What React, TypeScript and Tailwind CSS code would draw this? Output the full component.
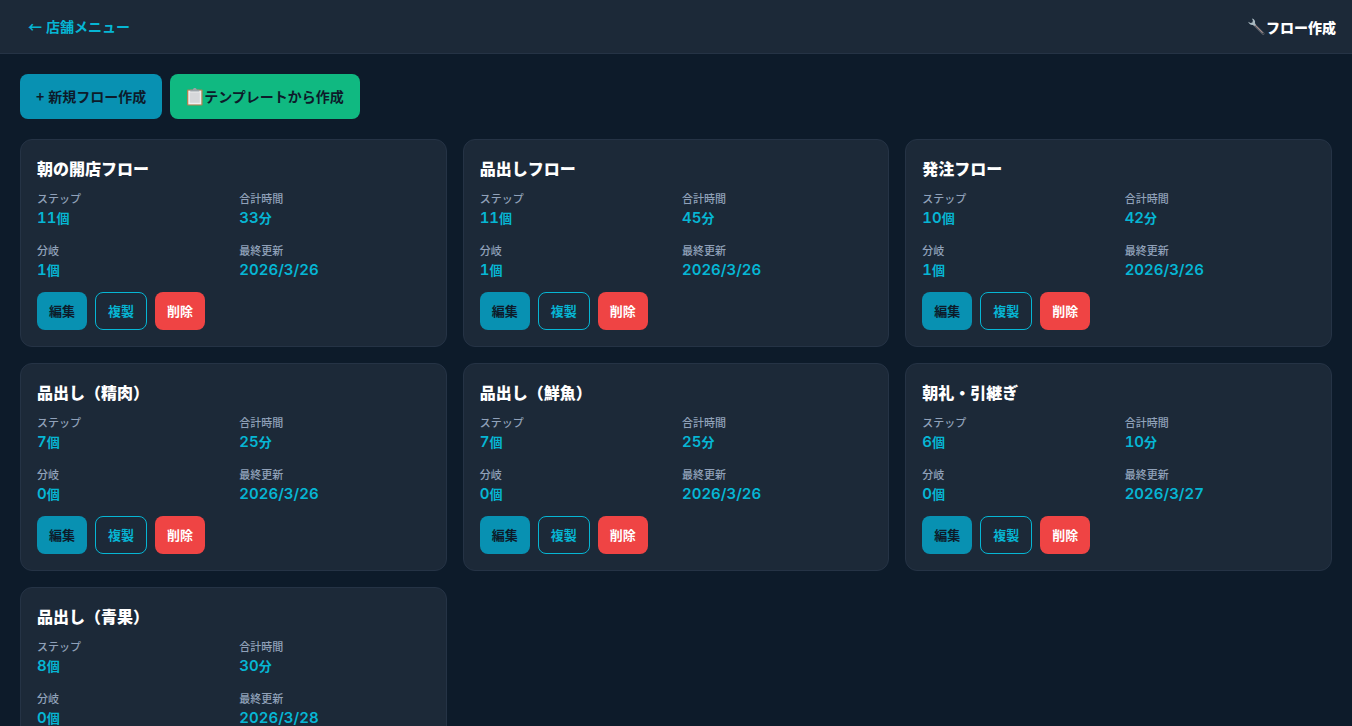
import React from 'react';

interface Flow {
  id: number;
  name: string;
  steps: number;
  minutes: number;
  branches: number;
  updatedAt: string;
}

const flows: Flow[] = [
  { id: 1, name: '朝の開店フロー', steps: 11, minutes: 33, branches: 1, updatedAt: '2026/3/26' },
  { id: 2, name: '品出しフロー', steps: 11, minutes: 45, branches: 1, updatedAt: '2026/3/26' },
  { id: 3, name: '発注フロー', steps: 10, minutes: 42, branches: 1, updatedAt: '2026/3/26' },
  { id: 4, name: '品出し（精肉）', steps: 7, minutes: 25, branches: 0, updatedAt: '2026/3/26' },
  { id: 5, name: '品出し（鮮魚）', steps: 7, minutes: 25, branches: 0, updatedAt: '2026/3/26' },
  { id: 6, name: '朝礼・引継ぎ', steps: 6, minutes: 10, branches: 0, updatedAt: '2026/3/27' },
  { id: 7, name: '品出し（青果）', steps: 8, minutes: 30, branches: 0, updatedAt: '2026/3/28' }
];

const WrenchIcon: React.FC = () => (
  <svg viewBox="0 0 18 18" className="h-[18px] w-[18px] shrink-0" aria-hidden="true">
    <path d="M6 6.4 L15.2 15.6" stroke="#5d646d" strokeWidth="2.6" strokeLinecap="round" />
    <path d="M7.2 7.2 L14.4 14.4" stroke="#a88a88" strokeWidth="1" strokeLinecap="round" />
    <path
      d="M3.9 .5 C6.4 .9 7.6 3 7 5.2 L7.8 6.4 L6.3 8 L5.1 6.9 C2.8 7.3 .8 5.9 .2 3.7 L2.5 4.9 L4.4 4.4 L4.9 2.5 Z"
      fill="#a9b8c0"
    />
    <circle cx="15.2" cy="15.5" r=".7" fill="#30343a" />
  </svg>
);

const ClipboardIcon: React.FC = () => (
  <svg viewBox="0 0 18 18" className="h-[18px] w-[18px] shrink-0" aria-hidden="true">
    <rect x="1" y="1.6" width="15.6" height="16" rx="1" fill="#b08452" />
    <rect x="2.3" y="2.6" width="13" height="13.8" fill="#f0f0f2" />
    <rect x="3.8" y="4.4" width="10" height="10.4" fill="#d6d7da" />
    <path d="M4.2 3.4 V1.8 H6.8 C7 .6 7.8 0 8.8 0 S10.6 .6 10.8 1.8 H13.4 V3.4 Z" fill="#9aa3a8" />
  </svg>
);

const Stat: React.FC<{ label: string; value: string | number; unit?: string }> = ({ label, value, unit }) => (
  <div>
    <dt className="text-[11px] leading-4 font-medium text-slate-400">{label}</dt>
    <dd className="font-['Inter','Noto_Sans_CJK_JP',sans-serif] text-[15px] leading-6 font-semibold text-[#06b6d4] tabular-nums">
      {value}
      {unit && <span className="text-[13px] leading-4">{unit}</span>}
    </dd>
  </div>
);

const FlowCard: React.FC<{ flow: Flow }> = ({ flow }) => (
  <article className="rounded-xl border border-[#253345] bg-[#1c2938] p-4">
    <h2 className="mb-2.5 text-base leading-6 font-black text-white">{flow.name}</h2>
    <dl className="mb-2.5 grid grid-cols-2 gap-3">
      <Stat label="ステップ" value={flow.steps} unit="個" />
      <Stat label="合計時間" value={flow.minutes} unit="分" />
      <Stat label="分岐" value={flow.branches} unit="個" />
      <Stat label="最終更新" value={flow.updatedAt} />
    </dl>
    <div className="flex gap-2 text-[13px] leading-5 font-bold">
      <button type="button" className="rounded-lg bg-[#0891b2] px-3 py-[9px] text-[#0d1b2a]">
        編集
      </button>
      <button type="button" className="rounded-lg border border-[#06b6d4] px-3 py-2 text-[#06b6d4]">
        複製
      </button>
      <button type="button" className="rounded-lg bg-[#ef4444] px-3 py-[9px] text-white">
        削除
      </button>
    </div>
  </article>
);

const App: React.FC = () => {
  return (
    <div className="min-h-screen bg-[#0d1b2a] font-['Noto_Sans_CJK_JP',sans-serif]">
      <header className="flex items-center justify-between border-b border-[#253345] bg-[#1c2938] px-4 py-2">
        <a href="#menu" className="flex gap-1 px-3 py-2 text-sm leading-[21px] font-semibold text-[#06b6d4]">
          <span>←</span>
          <span>店舗メニュー</span>
        </a>
        <h1 className="flex items-center text-sm leading-5 font-black text-white">
          <WrenchIcon />
          フロー作成
        </h1>
      </header>

      <main className="p-5">
        <div className="mb-5 flex gap-2 text-sm leading-[21px] font-semibold text-[#0d1b2a]">
          <button type="button" className="flex gap-1 rounded-lg bg-[#0891b2] px-4 py-3">
            <span>+</span>
            <span>新規フロー作成</span>
          </button>
          <button type="button" className="flex items-center rounded-lg bg-[#10b981] px-4 py-3">
            <ClipboardIcon />
            テンプレートから作成
          </button>
        </div>

        <div className="grid grid-cols-3 gap-4">
          {flows.map((flow) => (
            <FlowCard key={flow.id} flow={flow} />
          ))}
        </div>
      </main>
    </div>
  );
};

export default App;
